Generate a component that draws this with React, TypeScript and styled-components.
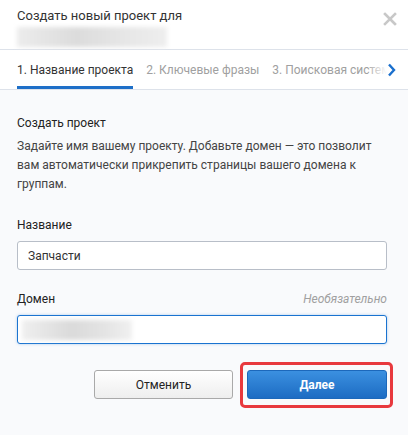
import React from 'react';
import styled, { createGlobalStyle } from 'styled-components';

const GlobalStyle = createGlobalStyle`
  html, body {
    margin: 0;
    padding: 0;
    background: #f9fafc;
  }
  body {
    font-family: Roboto, "Noto Sans", sans-serif;
    color: #333;
  }
`;

const Modal = styled.div`
  width: 408px;
  height: 435px;
  background: #f9fafc;
  overflow: hidden;
`;

const Header = styled.div`
  position: relative;
  background: #fff;
  padding: 7px 17px 0;
  height: 42px;
  border-bottom: 1px solid #dde2ea;
`;

const Title = styled.div`
  font-size: 13px;
  line-height: 18px;
  color: #333;
`;

const Blurred = styled.div<{ $w: number }>`
  width: ${(p) => p.$w}px;
  height: 20px;
  margin-top: 2px;
  background: linear-gradient(90deg, #ececec, #dcdcdc 40%, #e6e6e6 70%, #eeeeee);
  filter: blur(2px);
`;

const Close = styled.button`
  position: absolute;
  right: 10px;
  top: 12px;
  width: 16px;
  height: 16px;
  padding: 0;
  border: 0;
  background: none;
  cursor: pointer;
`;

const TabsBar = styled.div`
  position: relative;
  display: flex;
  gap: 13px;
  height: 39px;
  padding-left: 17px;
  background: #fff;
  border-bottom: 1px solid #dde2ea;
  overflow: hidden;
  white-space: nowrap;
`;

const Tab = styled.div<{ $active?: boolean }>`
  display: flex;
  align-items: center;
  padding-top: 3px;
  font-size: 12px;
  color: ${(p) => (p.$active ? '#333' : '#a0a0a0')};
  border-bottom: 3px solid ${(p) => (p.$active ? '#1e6fc8' : 'transparent')};
`;

const Chevron = styled.div`
  position: absolute;
  right: 0;
  top: 0;
  bottom: 0;
  width: 34px;
  display: flex;
  align-items: center;
  justify-content: center;
  padding-left: 4px;
  background: linear-gradient(90deg, rgba(255, 255, 255, 0.2), #fff 45%);
`;

const Body = styled.div`
  padding: 25px 21px 0 17px;
`;

const Heading = styled.div`
  font-size: 12px;
  line-height: 17px;
  color: #222;
`;

const Text = styled.p`
  margin: 5px 0 0;
  font-size: 12px;
  line-height: 19px;
  color: #444;
`;

const Field = styled.div<{ $gap: number }>`
  margin-top: ${(p) => p.$gap}px;
`;

const LabelRow = styled.div`
  display: flex;
  justify-content: space-between;
  align-items: center;
  font-size: 12px;
  line-height: 17px;
  color: #222;
  margin-bottom: 7px;
`;

const Optional = styled.span`
  font-style: italic;
  color: #a0a0a0;
`;

const Input = styled.div<{ $focused?: boolean }>`
  box-sizing: border-box;
  height: 29px;
  display: flex;
  align-items: center;
  padding: 0 10px;
  font-size: 12px;
  color: #333;
  background: #fff;
  border: 1px solid ${(p) => (p.$focused ? '#1a73d0' : '#b8bec8')};
  border-radius: 3px;
  box-shadow: ${(p) => (p.$focused ? '0 0 3px rgba(26, 115, 208, 0.35)' : 'none')};
`;

const InputBlur = styled(Blurred)`
  margin: 0 0 0 -6px;
  height: 20px;
  background: linear-gradient(90deg, #efefef, #dadada 45%, #e4e4e4 75%, #f0f0f0);
`;

const Actions = styled.div`
  display: flex;
  justify-content: flex-end;
  gap: 14px;
  margin-top: 26px;
`;

const Button = styled.button<{ $primary?: boolean }>`
  box-sizing: border-box;
  width: ${(p) => (p.$primary ? 140 : 139)}px;
  height: 29px;
  border-radius: 3px;
  font-family: Roboto, "Noto Sans", sans-serif;
  font-size: 12px;
  font-weight: ${(p) => (p.$primary ? 700 : 400)};
  color: ${(p) => (p.$primary ? '#fff' : '#222')};
  border: 1px solid ${(p) => (p.$primary ? '#1c68bb' : '#a9a9a9')};
  background: ${(p) =>
    p.$primary
      ? 'linear-gradient(180deg, #3b90e0, #1d6cc3)'
      : 'linear-gradient(180deg, #ffffff, #eeeeee)'};
  cursor: pointer;
`;

const Highlight = styled.div`
  position: relative;
  &::after {
    content: '';
    position: absolute;
    left: -7px;
    right: -6px;
    top: -8px;
    bottom: -9px;
    border: 3px solid #e8393e;
    border-radius: 5px;
    pointer-events: none;
  }
`;

const App: React.FC = () => (
  <>
    <GlobalStyle />
    <Modal>
      <Header>
        <Title>Создать новый проект для</Title>
        <Blurred $w={150} />
        <Close aria-label="Закрыть">
          <svg width="14" height="14" viewBox="0 0 14 14">
            <path d="M2 2 L12 12 M12 2 L2 12" stroke="#c8c8c8" strokeWidth="2.6" strokeLinecap="square" />
          </svg>
        </Close>
      </Header>
      <TabsBar>
        <Tab $active>1. Название проекта</Tab>
        <Tab>2. Ключевые фразы</Tab>
        <Tab>3. Поисковая система</Tab>
        <Chevron>
          <svg width="9" height="14" viewBox="0 0 9 14">
            <path d="M2 1.5 L7 7 L2 12.5" fill="none" stroke="#1a6fcd" strokeWidth="2.4" />
          </svg>
        </Chevron>
      </TabsBar>
      <Body>
        <Heading>Создать проект</Heading>
        <Text>
          Задайте имя вашему проекту. Добавьте домен — это позволит вам автоматически прикрепить
          страницы вашего домена к группам.
        </Text>
        <Field $gap={23}>
          <LabelRow>Название</LabelRow>
          <Input>Запчасти</Input>
        </Field>
        <Field $gap={21}>
          <LabelRow>
            Домен
            <Optional>Необязательно</Optional>
          </LabelRow>
          <Input $focused>
            <InputBlur $w={110} />
          </Input>
        </Field>
        <Actions>
          <Button>Отменить</Button>
          <Highlight>
            <Button $primary>Далее</Button>
          </Highlight>
        </Actions>
      </Body>
    </Modal>
  </>
);

export default App;
